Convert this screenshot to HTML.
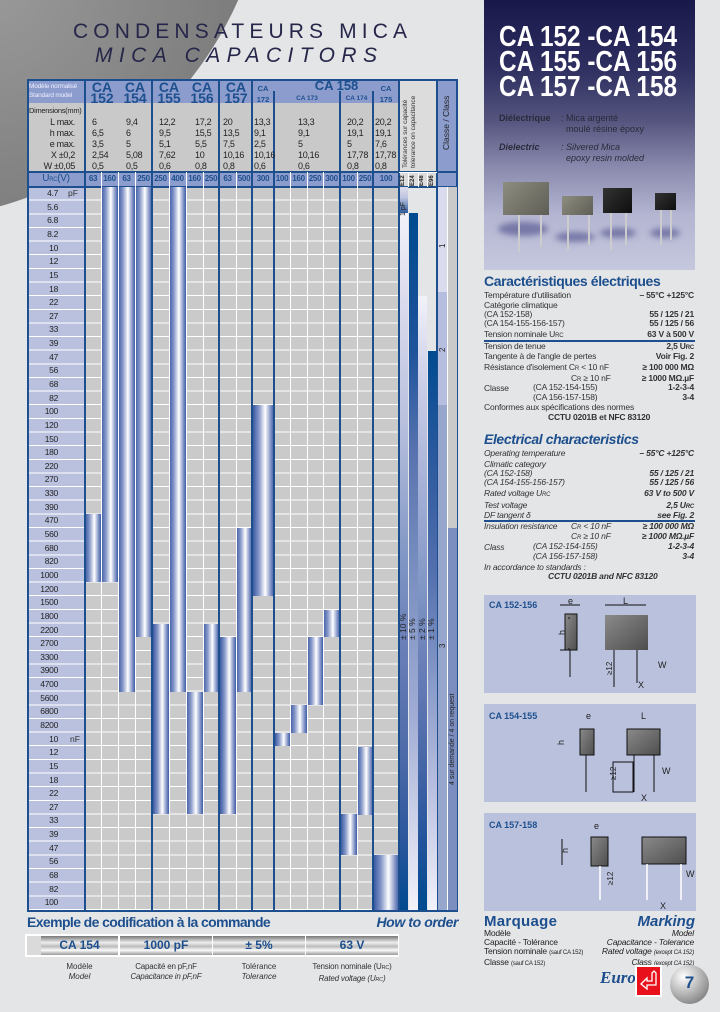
<!DOCTYPE html>
<html><head><meta charset="utf-8">
<style>
*{margin:0;padding:0;box-sizing:border-box}
body{width:720px;height:1012px;background:#e4e5e7;position:relative;overflow:hidden;font-family:"Liberation Sans",Arial,sans-serif;color:#222}
.a{position:absolute}
.t{position:absolute;font-size:9px;line-height:11px;white-space:nowrap;color:#333}
.bar{position:absolute;background:linear-gradient(90deg,#3a5aa2 0%,#8596c8 28%,#fff 58%,#8d9ccb 82%,#3d5da5 100%)}
.vw{position:absolute;width:1px;background:#fff}
.vb{position:absolute;width:2px;background:#1d4f8e}
.hd{position:absolute;color:#1d4f8e;font-weight:bold;text-align:center;font-size:14px;line-height:11px}
.dv{position:absolute;font-size:9px;color:#222;line-height:11px;letter-spacing:-0.3px}
.lb{position:absolute;left:28px;width:30px;text-align:right;font-size:8.5px;height:13.64px;line-height:13.64px;color:#222;letter-spacing:-0.3px}
.ur{position:absolute;top:172px;height:14px;line-height:14px;font-size:8px;font-weight:bold;color:#1d4f8e;text-align:center;letter-spacing:-0.3px}
.rl{position:absolute;font-size:8.5px;line-height:10px;color:#333;white-space:nowrap;letter-spacing:-0.2px}
.rr{position:absolute;right:26px;font-size:8.5px;line-height:10px;color:#333;white-space:nowrap;text-align:right;font-weight:bold;letter-spacing:-0.2px}
.it{font-style:italic}
.box{position:absolute}
.leg{position:absolute;width:1.5px}
.rot{position:absolute;transform:rotate(-90deg);transform-origin:left top;white-space:nowrap;color:#222}
</style></head><body>

<div class="a" style="left:-470px;top:-520px;width:740px;height:740px;border-radius:50%;background:radial-gradient(circle at 62% 68%,#9a9a9a 0%,#7a7a7a 40%,#8e8e8e 75%,#c8c8c8 92%,#dedede 100%)"></div>

<svg class="a" style="left:0;top:0" width="470" height="70">
<text x="73" y="38" textLength="334" lengthAdjust="spacing" font-family="Liberation Sans" font-size="21" fill="#26264a">CONDENSATEURS MICA</text>
<text x="95" y="62" textLength="282" lengthAdjust="spacing" font-family="Liberation Sans" font-size="21" font-style="italic" fill="#26264a">MICA CAPACITORS</text>
</svg>

<div class="a" style="left:28px;top:80px;width:371px;height:23px;background:#8c9dcd"></div>
<div class="a" style="left:28px;top:103px;width:371px;height:69px;background:#c9c9c9"></div>
<div class="a" style="left:28px;top:172px;width:371px;height:15px;background:#8c9dcd"></div>
<div class="a" style="left:399px;top:80px;width:38px;height:107px;background:#dcdcdc"></div>
<div class="a" style="left:437px;top:80px;width:21px;height:107px;background:#8c9dcd"></div>
<div class="a" style="left:28px;top:187px;width:57px;height:723px;background:repeating-linear-gradient(180deg,#b9c1df 0,#b9c1df 12.64px,#fff 12.64px,#fff 13.64px)"></div>
<div class="a" style="left:84px;top:187px;width:315px;height:723px;background:repeating-linear-gradient(180deg,#cacaca 0,#cacaca 12.64px,#fff 12.64px,#fff 13.64px)"></div>
<div class="a" style="left:27px;top:79px;width:431px;height:833px;border:2px solid #1d4f8e"></div>
<div class="a" style="left:28px;top:171px;width:430px;height:2px;background:#1d4f8e"></div>
<div class="a" style="left:28px;top:186px;width:430px;height:2px;background:#1d4f8e"></div>

<div class="bar" style="left:85px;top:514px;width:16px;height:68px"></div>
<div class="bar" style="left:101px;top:187px;width:17px;height:395px"></div>
<div class="bar" style="left:118px;top:187px;width:17px;height:505px"></div>
<div class="bar" style="left:135px;top:187px;width:17px;height:450px"></div>
<div class="bar" style="left:153px;top:624px;width:16px;height:190px"></div>
<div class="bar" style="left:169px;top:187px;width:17px;height:505px"></div>
<div class="bar" style="left:186px;top:692px;width:17px;height:122px"></div>
<div class="bar" style="left:203px;top:624px;width:16px;height:68px"></div>
<div class="bar" style="left:220px;top:637px;width:16px;height:177px"></div>
<div class="bar" style="left:236px;top:528px;width:16px;height:164px"></div>
<div class="bar" style="left:253px;top:405px;width:21px;height:191px"></div>
<div class="bar" style="left:275px;top:733px;width:15px;height:13px"></div>
<div class="bar" style="left:290px;top:705px;width:17px;height:28px"></div>
<div class="bar" style="left:307px;top:637px;width:16px;height:68px"></div>
<div class="bar" style="left:323px;top:610px;width:17px;height:27px"></div>
<div class="bar" style="left:341px;top:814px;width:16px;height:41px"></div>
<div class="bar" style="left:357px;top:747px;width:16px;height:68px"></div>
<div class="bar" style="left:374px;top:855px;width:25px;height:55px"></div>

<div class="vw" style="left:101px;top:172px;height:738px"></div>
<div class="vw" style="left:118px;top:172px;height:738px"></div>
<div class="vw" style="left:135px;top:172px;height:738px"></div>
<div class="vw" style="left:169px;top:172px;height:738px"></div>
<div class="vw" style="left:186px;top:172px;height:738px"></div>
<div class="vw" style="left:203px;top:172px;height:738px"></div>
<div class="vw" style="left:236px;top:172px;height:738px"></div>
<div class="vw" style="left:290px;top:172px;height:738px"></div>
<div class="vw" style="left:307px;top:172px;height:738px"></div>
<div class="vw" style="left:323px;top:172px;height:738px"></div>
<div class="vw" style="left:357px;top:172px;height:738px"></div>
<div class="vb" style="left:84px;top:80px;height:830px"></div>
<div class="vb" style="left:151px;top:80px;height:830px"></div>
<div class="vb" style="left:218px;top:80px;height:830px"></div>
<div class="vb" style="left:251px;top:80px;height:830px"></div>
<div class="vb" style="left:273px;top:91px;height:819px"></div>
<div class="vb" style="left:339px;top:91px;height:819px"></div>
<div class="vb" style="left:372px;top:91px;height:819px"></div>
<div class="vb" style="left:398px;top:80px;height:830px"></div>
<div class="vb" style="left:436px;top:80px;height:830px"></div>

<div class="a" style="left:400px;top:187px;width:8px;height:26px;background:linear-gradient(180deg,#dcdcec 0%,#c0c6e0 40%,#2c5a9e 100%)"></div>
<div class="a" style="left:400px;top:213px;width:8px;height:697px;background:linear-gradient(180deg,#f2f2fa 0%,#dcdcee 12%,#b8c0de 30%,#7f95c4 50%,#6a7fb8 62%,#4d6aa8 78%,#2b579d 90%,#004a8f 100%)"></div>
<div class="a" style="left:409px;top:213px;width:9px;height:697px;background:linear-gradient(180deg,#004a8f 0%,#1f549b 20%,#5a74b0 35%,#7a90c0 52%,#a0acd4 72%,#d0d4ea 88%,#f2f2fa 100%)"></div>
<div class="a" style="left:418px;top:296px;width:9px;height:614px;background:linear-gradient(180deg,#f2f2fa 0%,#c8cce6 15%,#a8b2d8 30%,#7f95c4 48%,#6a7fb8 60%,#4a68a8 75%,#1f529a 90%,#004a8f 100%)"></div>
<div class="a" style="left:428px;top:351px;width:9px;height:559px;background:linear-gradient(180deg,#004a8f 0%,#2d5a9f 20%,#5470ae 40%,#8a9cca 60%,#b8bedf 78%,#f2f2fa 100%)"></div>
<div class="a" style="left:438px;top:187px;width:10px;height:105px;background:#dadcee"></div>
<div class="a" style="left:438px;top:292px;width:10px;height:113px;background:#b6bedf"></div>
<div class="a" style="left:438px;top:405px;width:10px;height:505px;background:#97a6cc"></div>
<div class="a" style="left:448px;top:187px;width:9px;height:341px;background:#cacaca"></div>
<div class="a" style="left:448px;top:528px;width:9px;height:382px;background:#7b8ebf"></div>
<div class="a" style="left:447px;top:187px;width:1px;height:723px;background:#fff"></div>

<div class="rot" style="left:399px;top:640px;font-size:8.5px;line-height:9px">± 10 %</div>
<div class="rot" style="left:408px;top:640px;font-size:8.5px;line-height:9px">± 5 %</div>
<div class="rot" style="left:418px;top:640px;font-size:8.5px;line-height:9px">± 2 %</div>
<div class="rot" style="left:427px;top:640px;font-size:8.5px;line-height:9px">± 1 %</div>
<div class="rot" style="left:399px;top:216px;font-size:7px;line-height:9px">1 pF</div>
<div class="rot" style="left:438px;top:248px;font-size:8px;line-height:10px">1</div>
<div class="rot" style="left:438px;top:352px;font-size:8px;line-height:10px">2</div>
<div class="rot" style="left:438px;top:648px;font-size:8px;line-height:10px">3</div>
<div class="rot" style="left:448px;top:785px;font-size:7px;line-height:9px">4 sur demande / 4 on request</div>
<div class="rot" style="left:402px;top:168px;font-size:6.5px;line-height:8px;color:#333">Tolérances sur capacité<br>tolerance on capacitance</div>
<div class="rot" style="left:441px;top:150px;font-size:8.5px;line-height:11px">Classe / Class</div>
<div class="rot" style="left:399px;top:186px;font-size:6px;line-height:9px;font-weight:bold">E12</div>
<div class="rot" style="left:409px;top:186px;font-size:6px;line-height:9px;font-weight:bold">E24</div>
<div class="rot" style="left:418px;top:186px;font-size:6px;line-height:9px;font-weight:bold">E48</div>
<div class="rot" style="left:428px;top:186px;font-size:6px;line-height:9px;font-weight:bold">E96</div>
<div class="a" style="left:399px;top:172px;width:38px;height:1px;background:#fff"></div>
<div class="vw" style="left:408px;top:172px;height:15px"></div>
<div class="vw" style="left:418px;top:172px;height:15px"></div>
<div class="vw" style="left:427px;top:172px;height:15px"></div>

<div class="t" style="left:29px;top:82px;font-size:6.5px;line-height:9px;color:#eef;letter-spacing:-0.2px">Modèle normalisé<br>Standard model</div>
<div class="hd" style="left:86px;top:82px;width:32px">CA<br>152</div>
<div class="hd" style="left:119px;top:82px;width:32px">CA<br>154</div>
<div class="hd" style="left:153px;top:82px;width:32px">CA<br>155</div>
<div class="hd" style="left:186px;top:82px;width:32px">CA<br>156</div>
<div class="hd" style="left:220px;top:82px;width:32px">CA<br>157</div>
<div class="hd" style="left:253px;top:83px;width:20px;font-size:7.5px;line-height:11px">CA<br>172</div>
<div class="hd" style="left:274px;top:79px;width:125px;font-size:13px;line-height:13px">CA 158</div>
<div class="hd" style="left:274px;top:94px;width:66px;font-size:6.5px;line-height:9px">CA 173</div>
<div class="hd" style="left:340px;top:94px;width:33px;font-size:6.5px;line-height:9px">CA 174</div>
<div class="hd" style="left:373px;top:83px;width:26px;font-size:7.5px;line-height:11px">CA<br>175</div>

<div class="dv" style="left:29px;top:105px;font-size:7.5px">Dimensions(mm)</div>
<div class="dv" style="left:30px;top:117px;text-align:right;width:45px">L max.<br>h max.<br>e max.<br>X ±0,2<br>W ±0,05</div>
<div class="dv" style="left:92px;top:117px">6<br>6,5<br>3,5<br>2,54<br>0,5</div>
<div class="dv" style="left:126px;top:117px">9,4<br>6<br>5<br>5,08<br>0,5</div>
<div class="dv" style="left:159px;top:117px">12,2<br>9,5<br>5,1<br>7,62<br>0,6</div>
<div class="dv" style="left:195px;top:117px">17,2<br>15,5<br>5,5<br>10<br>0,8</div>
<div class="dv" style="left:223px;top:117px">20<br>13,5<br>7,5<br>10,16<br>0,8</div>
<div class="dv" style="left:254px;top:117px">13,3<br>9,1<br>2,5<br>10,16<br>0,6</div>
<div class="dv" style="left:298px;top:117px">13,3<br>9,1<br>5<br>10,16<br>0,6</div>
<div class="dv" style="left:347px;top:117px">20,2<br>19,1<br>5<br>17,78<br>0,8</div>
<div class="dv" style="left:375px;top:117px">20,2<br>19,1<br>7,6<br>17,78<br>0,8</div>

<div class="ur" style="left:28px;width:56px;font-size:10px;font-weight:normal;color:#1d4f8e">U<span style="font-size:6px">RC</span>(V)</div>
<div class="ur" style="left:85px;width:16px">63</div>
<div class="ur" style="left:101px;width:17px">160</div>
<div class="ur" style="left:118px;width:17px">63</div>
<div class="ur" style="left:135px;width:17px">250</div>
<div class="ur" style="left:152px;width:17px">250</div>
<div class="ur" style="left:169px;width:17px">400</div>
<div class="ur" style="left:186px;width:17px">160</div>
<div class="ur" style="left:203px;width:16px">250</div>
<div class="ur" style="left:219px;width:17px">63</div>
<div class="ur" style="left:236px;width:16px">500</div>
<div class="ur" style="left:252px;width:22px">300</div>
<div class="ur" style="left:274px;width:16px">100</div>
<div class="ur" style="left:290px;width:17px">160</div>
<div class="ur" style="left:307px;width:16px">250</div>
<div class="ur" style="left:323px;width:17px">300</div>
<div class="ur" style="left:340px;width:17px">100</div>
<div class="ur" style="left:357px;width:16px">250</div>
<div class="ur" style="left:373px;width:26px">100</div>

<div class="lb" style="top:187px">4.7</div><div class="t" style="left:68px;top:188px;font-size:8.5px">pF</div>
<div class="lb" style="top:200.6px">5.6</div>
<div class="lb" style="top:214.3px">6.8</div>
<div class="lb" style="top:227.9px">8.2</div>
<div class="lb" style="top:241.6px">10</div>
<div class="lb" style="top:255.2px">12</div>
<div class="lb" style="top:268.8px">15</div>
<div class="lb" style="top:282.5px">18</div>
<div class="lb" style="top:296.1px">22</div>
<div class="lb" style="top:309.8px">27</div>
<div class="lb" style="top:323.4px">33</div>
<div class="lb" style="top:337px">39</div>
<div class="lb" style="top:350.7px">47</div>
<div class="lb" style="top:364.3px">56</div>
<div class="lb" style="top:378px">68</div>
<div class="lb" style="top:391.6px">82</div>
<div class="lb" style="top:405.2px">100</div>
<div class="lb" style="top:418.9px">120</div>
<div class="lb" style="top:432.5px">150</div>
<div class="lb" style="top:446.2px">180</div>
<div class="lb" style="top:459.8px">220</div>
<div class="lb" style="top:473.4px">270</div>
<div class="lb" style="top:487.1px">330</div>
<div class="lb" style="top:500.7px">390</div>
<div class="lb" style="top:514.4px">470</div>
<div class="lb" style="top:528px">560</div>
<div class="lb" style="top:541.6px">680</div>
<div class="lb" style="top:555.3px">820</div>
<div class="lb" style="top:568.9px">1000</div>
<div class="lb" style="top:582.6px">1200</div>
<div class="lb" style="top:596.2px">1500</div>
<div class="lb" style="top:609.8px">1800</div>
<div class="lb" style="top:623.5px">2200</div>
<div class="lb" style="top:637.1px">2700</div>
<div class="lb" style="top:650.8px">3300</div>
<div class="lb" style="top:664.4px">3900</div>
<div class="lb" style="top:678px">4700</div>
<div class="lb" style="top:691.7px">5600</div>
<div class="lb" style="top:705.3px">6800</div>
<div class="lb" style="top:719px">8200</div>
<div class="lb" style="top:732.6px">10</div><div class="t" style="left:70px;top:734px;font-size:8.5px">nF</div>
<div class="lb" style="top:746.2px">12</div>
<div class="lb" style="top:759.9px">15</div>
<div class="lb" style="top:773.5px">18</div>
<div class="lb" style="top:787.2px">22</div>
<div class="lb" style="top:800.8px">27</div>
<div class="lb" style="top:814.4px">33</div>
<div class="lb" style="top:828.1px">39</div>
<div class="lb" style="top:841.7px">47</div>
<div class="lb" style="top:855.4px">56</div>
<div class="lb" style="top:869px">68</div>
<div class="lb" style="top:882.6px">82</div>
<div class="lb" style="top:896.3px">100</div>

<div class="a" style="left:27px;top:914px;font-size:14px;font-weight:bold;color:#1d4f8e;letter-spacing:-0.6px;white-space:nowrap">Exemple de codification à la commande</div>
<div class="a" style="left:360px;width:98px;text-align:right;top:914px;font-size:14px;font-weight:bold;font-style:italic;color:#1d4f8e;letter-spacing:-0.4px;white-space:nowrap">How to order</div>
<div class="a" style="left:25px;top:934px;width:374px;height:23px;background:#fff"></div>
<div class="a" style="left:27px;top:936px;width:14px;height:19px;background:#dadada"></div>
<div class="a" style="left:41px;top:936px;width:77px;height:19px;background:linear-gradient(180deg,#777 0%,#eee 35%,#bbb 55%,#fafafa 75%,#999 100%);color:#1d4f8e;font-weight:bold;font-size:12px;text-align:center;line-height:19px">CA 154</div>
<div class="a" style="left:120px;top:936px;width:92px;height:19px;background:linear-gradient(180deg,#777 0%,#eee 35%,#bbb 55%,#fafafa 75%,#999 100%);color:#1d4f8e;font-weight:bold;font-size:12px;text-align:center;line-height:19px">1000 pF</div>
<div class="a" style="left:213px;top:936px;width:92px;height:19px;background:linear-gradient(180deg,#777 0%,#eee 35%,#bbb 55%,#fafafa 75%,#999 100%);color:#1d4f8e;font-weight:bold;font-size:12px;text-align:center;line-height:19px">± 5%</div>
<div class="a" style="left:306px;top:936px;width:92px;height:19px;background:linear-gradient(180deg,#777 0%,#eee 35%,#bbb 55%,#fafafa 75%,#999 100%);color:#1d4f8e;font-weight:bold;font-size:12px;text-align:center;line-height:19px">63 V</div>
<div class="t" style="left:31px;top:962px;width:97px;text-align:center;line-height:9.5px;font-size:8px;color:#333">Modèle<br><i>Model</i></div>
<div class="t" style="left:115px;top:962px;width:102px;text-align:center;line-height:9.5px;font-size:8px;color:#333;letter-spacing:-0.2px">Capacité en pF,nF<br><i>Capacitance in pF,nF</i></div>
<div class="t" style="left:208px;top:962px;width:102px;text-align:center;line-height:9.5px;font-size:8px;color:#333">Tolérance<br><i>Tolerance</i></div>
<div class="t" style="left:300px;top:962px;width:104px;text-align:center;line-height:9.5px;font-size:8px;color:#333;letter-spacing:-0.2px">Tension nominale (U<span style="font-size:5.5px">RC</span>)<br><i>Rated voltage (U<span style="font-size:5.5px">RC</span>)</i></div>

<div class="a" style="left:484px;top:0;width:211px;height:270px;background:linear-gradient(180deg,#18184a 0%,#2e2e60 25%,#55557f 45%,#8a8aae 62%,#b4b6d2 80%,#c6c8de 100%)"></div>
<svg class="a" style="left:484px;top:0" width="211" height="110">
<g font-family="Liberation Sans" font-weight="bold" font-size="29" fill="#fff">
<text x="15" y="46" textLength="178" lengthAdjust="spacingAndGlyphs">CA 152 -CA 154</text>
<text x="15" y="71" textLength="178" lengthAdjust="spacingAndGlyphs">CA 155 -CA 156</text>
<text x="15" y="96" textLength="178" lengthAdjust="spacingAndGlyphs">CA 157 -CA 158</text>
</g></svg>
<div class="t" style="left:499px;top:113px;font-size:9px;color:#2a2a3a;line-height:11px"><b>Diélectrique</b></div>
<div class="t" style="left:561px;top:113px;font-size:9px;color:#2a2a3a;line-height:11px">: Mica argenté<br>&nbsp; moulé résine époxy</div>
<div class="t" style="left:499px;top:142px;font-size:9px;color:#2a2a3a;font-style:italic"><b>Dielectric</b></div>
<div class="t" style="left:561px;top:142px;font-size:9px;color:#2a2a3a;line-height:11px;font-style:italic">: Silvered Mica<br>&nbsp; epoxy resin molded</div>
<div class="a" style="left:498px;top:222px;width:50px;height:14px;border-radius:50%;background:rgba(40,40,110,.45);filter:blur(3px)"></div>
<div class="a" style="left:555px;top:232px;width:40px;height:10px;border-radius:50%;background:rgba(40,40,110,.45);filter:blur(3px)"></div>
<div class="a" style="left:600px;top:228px;width:36px;height:10px;border-radius:50%;background:rgba(40,40,110,.45);filter:blur(3px)"></div>
<div class="a" style="left:650px;top:228px;width:30px;height:10px;border-radius:50%;background:rgba(40,40,110,.45);filter:blur(3px)"></div>
<div class="box" style="left:503px;top:182px;width:46px;height:33px;background:linear-gradient(135deg,#8d8d80,#5e5e55)"></div>
<div class="leg" style="left:518px;top:215px;height:37px;background:#ccc"></div>
<div class="leg" style="left:540px;top:215px;height:32px;background:#ccc"></div>
<div class="box" style="left:562px;top:196px;width:31px;height:19px;background:linear-gradient(135deg,#8d8d80,#5e5e55)"></div>
<div class="leg" style="left:567px;top:215px;height:35px;background:#ccc"></div>
<div class="leg" style="left:588px;top:215px;height:30px;background:#ccc"></div>
<div class="box" style="left:603px;top:188px;width:29px;height:25px;background:linear-gradient(135deg,#333,#0e0e0e)"></div>
<div class="leg" style="left:610px;top:213px;height:37px;background:#ccc"></div>
<div class="leg" style="left:625px;top:213px;height:32px;background:#ccc"></div>
<div class="box" style="left:655px;top:193px;width:21px;height:17px;background:linear-gradient(135deg,#333,#0e0e0e)"></div>
<div class="leg" style="left:660px;top:210px;height:35px;background:#ccc"></div>
<div class="leg" style="left:670px;top:210px;height:30px;background:#ccc"></div>

<div class="a" style="left:484px;top:273px;font-size:14px;font-weight:bold;color:#1d4f8e;letter-spacing:-0.4px;white-space:nowrap">Caractéristiques électriques</div>
<div class="rl" style="left:484px;top:290px">Température d'utilisation</div><div class="rr" style="top:290px">– 55°C +125°C</div>
<div class="rl" style="left:484px;top:300px">Catégorie climatique</div>
<div class="rl" style="left:484px;top:309px">(CA 152-158)</div><div class="rr" style="top:309px">55 / 125 / 21</div>
<div class="rl" style="left:484px;top:318px">(CA 154-155-156-157)</div><div class="rr" style="top:318px">55 / 125 / 56</div>
<div class="rl" style="left:484px;top:329px">Tension nominale U<span style="font-size:6px">RC</span></div><div class="rr" style="top:329px">63 V à 500 V</div>
<div class="a" style="left:484px;top:340px;width:211px;height:1.5px;background:#1d4f8e"></div>
<div class="rl" style="left:484px;top:341px">Tension de tenue</div><div class="rr" style="top:341px">2,5 U<span style="font-size:6px">RC</span></div>
<div class="rl" style="left:484px;top:351px">Tangente à de l'angle de pertes</div><div class="rr" style="top:351px">Voir Fig. 2</div>
<div class="rl" style="left:484px;top:362px">Résistance d'isolement C<span style="font-size:6px">R</span> &lt; 10 nF</div><div class="rr" style="top:362px">≥ 100 000 MΩ</div>
<div class="rl" style="left:571px;top:373px">C<span style="font-size:6px">R</span> ≥ 10 nF</div><div class="rr" style="top:373px">≥ 1000 MΩ.µF</div>
<div class="rl" style="left:484px;top:383px">Classe</div><div class="rl" style="left:533px;top:383px;line-height:9.5px">(CA 152-154-155)<br>(CA 156-157-158)</div><div class="rr" style="top:383px;line-height:9.5px">1-2-3-4<br>3-4</div>
<div class="rl" style="left:484px;top:403px;line-height:9.5px">Conformes aux spécifications des normes</div>
<div class="rl" style="left:548px;top:412px;font-weight:bold">CCTU 0201B et NFC 83120</div>

<div class="a" style="left:484px;top:431px;font-size:14px;font-weight:bold;font-style:italic;color:#1d4f8e;letter-spacing:-0.4px;white-space:nowrap">Electrical characteristics</div>
<div class="rl it" style="left:484px;top:448px">Operating temperature</div><div class="rr it" style="top:448px">– 55°C +125°C</div>
<div class="rl it" style="left:484px;top:459px">Climatic category</div>
<div class="rl it" style="left:484px;top:468px">(CA 152-158)</div><div class="rr it" style="top:468px">55 / 125 / 21</div>
<div class="rl it" style="left:484px;top:477px">(CA 154-155-156-157)</div><div class="rr it" style="top:477px">55 / 125 / 56</div>
<div class="rl it" style="left:484px;top:488px">Rated voltage U<span style="font-size:6px">RC</span></div><div class="rr it" style="top:488px">63 V to 500 V</div>
<div class="rl it" style="left:484px;top:500px">Test voltage</div><div class="rr it" style="top:500px">2,5 U<span style="font-size:6px">RC</span></div>
<div class="rl it" style="left:484px;top:510px">DF tangent δ</div><div class="rr it" style="top:510px">see Fig. 2</div>
<div class="a" style="left:484px;top:520px;width:211px;height:1.5px;background:#1d4f8e"></div>
<div class="rl it" style="left:484px;top:521px">Insulation resistance</div><div class="rl it" style="left:571px;top:521px">C<span style="font-size:6px">R</span> &lt; 10 nF</div><div class="rr it" style="top:521px">≥ 100 000 MΩ</div>
<div class="rl it" style="left:571px;top:531px">C<span style="font-size:6px">R</span> ≥ 10 nF</div><div class="rr it" style="top:531px">≥ 1000 MΩ.µF</div>
<div class="rl it" style="left:484px;top:542px">Class</div><div class="rl it" style="left:533px;top:542px;line-height:9.5px">(CA 152-154-155)<br>(CA 156-157-158)</div><div class="rr it" style="top:542px;line-height:9.5px">1-2-3-4<br>3-4</div>
<div class="rl it" style="left:484px;top:562px">In accordance to standards :</div>
<div class="rl it" style="left:548px;top:571px;font-weight:bold">CCTU 0201B and NFC 83120</div>

<svg class="a" style="left:484px;top:595px" width="212" height="316">
<defs><linearGradient id="g" x1="0" y1="0" x2="1" y2="1"><stop offset="0" stop-color="#8a8a8a"/><stop offset="1" stop-color="#4e4e4e"/></linearGradient></defs>
<g font-family="Liberation Sans" font-size="9" fill="#222">
<rect x="0" y="0" width="212" height="98" fill="#b9c1dd"/>
<text x="5" y="13" font-weight="bold" fill="#1d4f8e" font-size="9">CA 152-156</text>
<rect x="81" y="19" width="12" height="36" fill="url(#g)" stroke="#111"/>
<line x1="86" y1="55" x2="86" y2="82" stroke="#111"/>
<rect x="121" y="20" width="43" height="35" fill="url(#g)"/>
<line x1="130" y1="55" x2="130" y2="92" stroke="#111"/><line x1="153" y1="55" x2="153" y2="88" stroke="#111"/>
<line x1="76" y1="10" x2="96" y2="10" stroke="#111"/><text x="84" y="9">e</text>
<line x1="121" y1="10" x2="162" y2="10" stroke="#111"/><text x="139" y="9">L</text>
<text x="81" y="40" transform="rotate(-90 81 40)" dx="0" dy="0">h</text>
<path d="M85 22 V24 M85 53 V55 M76 55 H86" stroke="#111" fill="none"/>
<text x="128" y="80" transform="rotate(-90 128 80)" font-size="8">≥12</text>
<text x="154" y="93">X</text><text x="174" y="73">W</text>
<rect x="0" y="109" width="212" height="98" fill="#b9c1dd"/>
<text x="5" y="124" font-weight="bold" fill="#1d4f8e" font-size="9">CA 154-155</text>
<rect x="96" y="134" width="14" height="26" fill="url(#g)" stroke="#111"/>
<line x1="102" y1="160" x2="102" y2="197" stroke="#111"/>
<rect x="143" y="134" width="33" height="26" fill="url(#g)" stroke="#111"/>
<line x1="150" y1="160" x2="150" y2="197" stroke="#111"/><line x1="170" y1="160" x2="170" y2="197" stroke="#111"/>
<rect x="129" y="167" width="20" height="30" fill="none" stroke="#111"/>
<text x="102" y="124">e</text><text x="157" y="124">L</text>
<text x="80" y="150" transform="rotate(-90 80 150)">h</text>
<text x="132" y="185" transform="rotate(-90 132 185)" font-size="8">≥12</text>
<text x="157" y="206">X</text><text x="178" y="179">W</text>
<rect x="0" y="218" width="212" height="98" fill="#b9c1dd"/>
<text x="5" y="233" font-weight="bold" fill="#1d4f8e" font-size="9">CA 157-158</text>
<rect x="107" y="242" width="17" height="29" fill="url(#g)" stroke="#111"/>
<line x1="116" y1="271" x2="116" y2="305" stroke="#fff" stroke-width="1.5"/>
<rect x="158" y="242" width="44" height="27" fill="url(#g)" stroke="#111"/>
<line x1="163" y1="269" x2="163" y2="305" stroke="#fff" stroke-width="1.5"/><line x1="197" y1="269" x2="197" y2="305" stroke="#fff" stroke-width="1.5"/>
<line x1="78" y1="244" x2="78" y2="270" stroke="#111"/>
<text x="110" y="234">e</text><text x="84" y="258" transform="rotate(-90 84 258)">h</text>
<text x="129" y="290" transform="rotate(-90 129 290)" font-size="8">≥12</text>
<text x="176" y="314">X</text><text x="202" y="282">W</text>
</g></svg>

<div class="a" style="left:484px;top:913px;font-size:15px;font-weight:bold;color:#1d4f8e;letter-spacing:0.3px">Marquage</div>
<div class="a" style="left:600px;width:95px;text-align:right;top:913px;font-size:15px;font-weight:bold;font-style:italic;color:#1d4f8e">Marking</div>
<div class="rl" style="left:484px;top:929px;line-height:9px;font-size:8.5px;color:#222">Modèle<br>Capacité - Tolérance<br>Tension nominale <span style="font-size:6px">(sauf CA 152)</span><br>Classe <span style="font-size:6px">(sauf CA 152)</span></div>
<div class="a" style="right:26px;top:929px;line-height:9px;font-size:8.5px;color:#222;text-align:right;white-space:nowrap;font-style:italic;letter-spacing:-0.2px">Model<br>Capacitance - Tolerance<br>Rated voltage <span style="font-size:6px">(except CA 152)</span><br>Class <span style="font-size:6px">(except CA 152)</span></div>
<div class="a" style="left:600px;top:968px;font-family:'Liberation Serif',serif;font-style:italic;font-weight:bold;font-size:17px;color:#1d4f8e">Europ</div>
<div class="a" style="left:635px;top:965px;width:27px;height:32px;background:#fff"></div>
<div class="a" style="left:637px;top:967px;width:23px;height:28px;background:#e8101a"></div>
<svg class="a" style="left:637px;top:967px" width="23" height="28"><path d="M4 17 L10 11 L10 14 L15 14 L15 6 L17 4 L19 6 L19 18 L10 18 L10 22 Z" fill="none" stroke="#fff" stroke-width="1.3"/></svg>
<div class="a" style="left:670px;top:965px;width:39px;height:39px;border-radius:50%;background:radial-gradient(circle at 35% 30%,#fff 0%,#cfcfcf 30%,#8a8a8a 75%,#5a5a5a 100%)"></div>
<div class="a" style="left:670px;top:973px;width:39px;text-align:center;font-size:17px;font-weight:bold;color:#1d4f8e">7</div>
</body></html>
